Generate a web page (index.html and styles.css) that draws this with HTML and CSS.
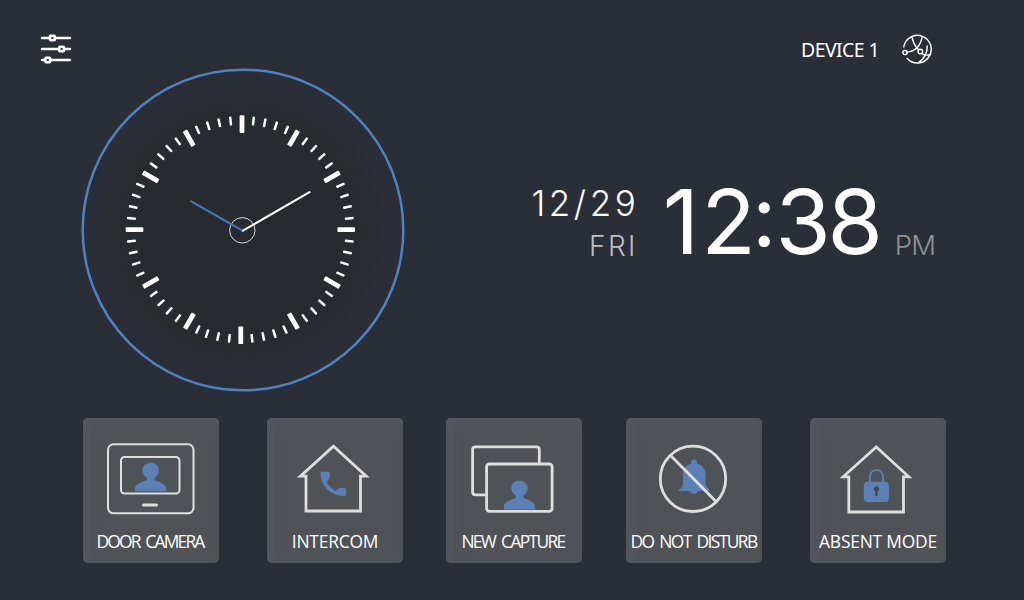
FILE: index.html
```html
<!DOCTYPE html>
<html lang="en">
<head>
<meta charset="utf-8">
<title>Home panel</title>
<link rel="stylesheet" href="styles.css">
</head>
<body>
<div class="screen">
  <header class="topbar">
    <svg class="settings" width="32" height="32" viewBox="0 0 32 32">
      <g stroke="#fff" stroke-width="2.4" stroke-linecap="round"><path d="M2 5H30M2 16H30M2 27H30"/></g>
      <g fill="#2a2e37" stroke="#fff" stroke-width="2.6"><rect x="10.1" y="2.8" width="4.6" height="4.4" rx=".6"/><rect x="19.3" y="13.8" width="4.6" height="4.4" rx=".6"/><rect x="5.5" y="24.8" width="4.6" height="4.4" rx=".6"/></g>
    </svg>
    <div class="device">DEVICE 1</div>
    <svg class="network" width="32" height="32" viewBox="0 0 32 32" fill="none" stroke="#fff" stroke-width="1.45">
      <path d="M2.700 14.500A13.800 13.800 0 1 1 5.800 25"/>
      <path d="M10.800 3.300Q12.500 12 18 17.200M21.200 3.600Q18.500 18 6 19.100M20.600 20.600Q24.500 22.800 29.200 21.800M26.300 12.500Q26.500 23.500 17.500 29.600"/>
      <circle cx="4" cy="19.500" r="2.100"/><circle cx="19.300" cy="18.500" r="2.300"/>
    </svg>
  </header>
  <main class="middle">
    <svg class="clock" width="324" height="324" viewBox="81 68 324 324">
      <defs>
        <radialGradient id="face"><stop offset="0" stop-color="#272a2e"/><stop offset=".71" stop-color="#272a2e"/><stop offset=".84" stop-color="#292c33"/><stop offset="1" stop-color="#2a2e37"/></radialGradient>
      </defs>
      <circle cx="243" cy="230" r="160.300" fill="url(#face)" stroke="#5082c3" stroke-width="2.500"/>
      <g id="ticks" fill="#fff"></g>
      <circle cx="242.300" cy="230.300" r="12.700" fill="none" stroke="#d8d8d8" stroke-width="1"/>
      <path d="M191.200 201.300L242.500 230.600" stroke="#4377bd" stroke-width="2.100" stroke-linecap="round"/>
      <path d="M243 230.600L309.500 192.200" stroke="#fff" stroke-width="2.100" stroke-linecap="round"/>
    </svg>
    <div class="now">
      <div class="date"><div class="day">12/29</div><div class="weekday">FRI</div></div>
      <div class="time"><span class="one">1</span>2<span class="colon">:</span><span class="three">3</span>8</div>
      <div class="ampm">PM</div>
    </div>
  </main>
  <nav class="tiles">
    <div class="tile">
      <svg class="icon" viewBox="0 0 136 110" fill="none" stroke="#dedede">
        <rect x="25" y="26.300" width="85.500" height="69" rx="5.500" stroke-width="2"/><rect x="38" y="39" width="58.500" height="36.500" rx="3.500" stroke-width="2"/><path d="M60.500 87H73.500" stroke-width="3" stroke-linecap="round"/>
        <path class="blue" d="M52 73.300V70.500C52 66.500 58 64.500 63 62.500Q65 61.500 63.500 59.500C60.500 57 59.400 54.500 59.400 52A8.300 7.300 0 0 1 76 52C76 54.500 75 57 72 59.500Q70.500 61.500 72.500 62.500C77.500 64.500 83.200 66.500 83.200 70.500V73.300Z"/>
      </svg>
      <span class="label door">DOOR CAMERA</span>
    </div>
    <div class="tile">
      <svg class="icon" viewBox="0 0 136 110" fill="none" stroke="#dedede" stroke-width="2.800">
        <path d="M66.500 28.200L99.200 58.200H93.500V93H39V58.200H33.500Z"/>
        <path class="blue" d="M54.500 53.800H61.500Q62.600 53.800 62.600 55V60L59.500 64Q63 69.500 68 73L72 70H77.500Q79 70 79 71.500V76Q79 78 77 78C64 78 53.500 68 53.500 55Q53.500 53.800 54.500 53.800Z"/>
      </svg>
      <span class="label intercom">INTERCOM</span>
    </div>
    <div class="tile">
      <svg class="icon" viewBox="0 0 136 110" fill="none" stroke="#dedede" stroke-width="2.800">
        <path d="M39.500 76.800H29.500Q26.600 76.800 26.600 74V31.600Q26.600 28.800 29.500 28.800H90.500Q93.300 28.800 93.300 31.600V46"/>
        <rect x="40.600" y="46" width="65.500" height="47.300" rx="2.800"/>
        <path class="blue" d="M58 91.400V88.300C58 84.300 64 82.300 69 80.300Q71 79.300 69.500 77.300C66.500 74.800 65.200 72.300 65.200 69.800A8.300 7.300 0 0 1 81.800 69.800C81.800 72.300 81 74.800 78 77.300Q76.500 79.300 78.500 80.300C83.500 82.300 89 84.300 89 88.300V91.400Z"/>
      </svg>
      <span class="label capture">NEW CAPTURE</span>
    </div>
    <div class="tile">
      <svg class="icon" viewBox="0 0 136 110" fill="none" stroke="#dedede" stroke-width="2.800">
        <path class="blue" d="M65.300 45.800A3 3 0 1 1 70.700 45.800Q79.500 47.500 79.500 57V66Q80 69 83 70.500V73H71.800A3.900 3.900 0 0 1 64.200 73H53V71.500Q57 70 57 66V57Q57 47.500 65.300 45.800Z"/>
        <circle cx="67" cy="60.800" r="32.700"/><path d="M44.600 37.500L90 83.500"/>
      </svg>
      <span class="label disturb">DO NOT DISTURB</span>
    </div>
    <div class="tile">
      <svg class="icon" viewBox="0 0 136 110" fill="none" stroke="#dedede" stroke-width="2.800">
        <path d="M66.300 29L98.800 58.800H93.500V94H38.800V58.800H33.200Z"/>
        <rect class="blue" x="53.800" y="63.800" width="25.200" height="20.200" rx="4"/><path d="M60 64V58.500A6.500 6.500 0 0 1 73 58.500V64" stroke="#5b80b4" stroke-width="1.700"/><path d="M65.200 73.400A2.700 2.700 0 1 1 67.700 73.400V77.400Q66.400 79 65.200 77.400Z" fill="#45484e" stroke="none"/>
      </svg>
      <span class="label absent">ABSENT MODE</span>
    </div>
  </nav>
</div>
<script src="clock.js"></script>
</body>
</html>
```
FILE: styles.css
```css
body { margin: 0; background: #2a2e37; color: #fff; font-family: "Open Sans", "Noto Sans", sans-serif; }
.screen { width: 1024px; height: 600px; overflow: hidden; display: flex; flex-direction: column; }
.topbar { height: 68px; box-sizing: border-box; padding: 33px 91px 0 40px; display: flex; align-items: flex-start; }
.settings { display: block; }
.device { margin-left: auto; margin-top: 4px; font-size: 19.500px; line-height: 26px; letter-spacing: -0.600px; white-space: nowrap; font-family: "Noto Sans", sans-serif; }
.network { display: block; margin-left: 22px; }
.middle { height: 350px; padding: 0 89px 0 81px; display: flex; justify-content: space-between; align-items: flex-start; }
.clock { display: block; }
.now { display: flex; margin-top: 104px; font-family: Inter, sans-serif; white-space: nowrap; }
.date { display: flex; flex-direction: column; align-items: flex-end; margin-right: 27px; }
.day { font-size: 35px; line-height: 42px; margin-top: 10px; font-weight: 300; letter-spacing: 3.600px; margin-right: -3.600px; }
.weekday { font-size: 28px; line-height: 34px; margin-top: 5px; font-weight: 300; letter-spacing: 2.300px; margin-right: -1.800px; color: #bdbec1; }
.time { font-size: 89.500px; line-height: 100px; letter-spacing: -2.500px; font-weight: 400; }
.one { letter-spacing: 2px; }
.three { letter-spacing: -3.500px; }
.colon { display: inline-block; line-height: 1; transform: translate(-1.5px, -6px) scale(.95); margin-right: -1px; }
.ampm { font-size: 27.500px; line-height: 34px; margin: 56px 0 0 14.500px; font-weight: 300; letter-spacing: -0.900px; color: #929396; }
.tiles { display: grid; grid-template-columns: 184px 179px 180px 184px 136px; margin-left: 83px; }
.tile { width: 136px; height: 145px; border-radius: 5px; background: #4f5358; box-shadow: inset 7px 4px 10px #555860; display: flex; flex-direction: column; align-items: center; }
.icon { display: block; width: 136px; height: 110px; }
.blue { fill: #5b80b4; stroke: none; }
.label { font-size: 17.400px; line-height: 26px; white-space: pre; }
.door { letter-spacing: -1.800px; word-spacing: 3px; margin-right: 2px; }
.intercom { letter-spacing: -0.200px; }
.capture { letter-spacing: -1.650px; word-spacing: 3px; margin-right: 2px; }
.disturb { letter-spacing: -1.600px; word-spacing: 3px; margin-right: 1px; }
.absent { letter-spacing: -0.200px; }
```
FILE: clock.js
```js
const ticks = document.getElementById('ticks');
const svgNS = 'http://www.w3.org/2000/svg';

// Horizontal centre of the dial for each part of the ring.
function centreX(angle) {
  if (angle <= 24 || angle >= 336) return 242;
  if (angle === 30) return 240.7;
  if (angle < 180) return 240.6;
  if (angle <= 198) return 240.8;
  if (angle <= 240) return 242.2;
  if (angle < 300) return 240.1;
  return 242;
}

for (let angle = 0; angle < 360; angle += 6) {
  const major = angle % 30 === 0;
  const width = major ? 4.8 : 2.5;
  const cx = centreX(angle);
  const rect = document.createElementNS(svgNS, 'rect');
  rect.setAttribute('x', cx - width / 2);
  rect.setAttribute('y', major ? 115.3 : 116);
  rect.setAttribute('width', width);
  rect.setAttribute('height', major ? 17.6 : 8.9);
  rect.setAttribute('rx', 0.8);
  rect.setAttribute('transform', `rotate(${angle} ${cx} 229.7)`);
  ticks.appendChild(rect);
}
```
